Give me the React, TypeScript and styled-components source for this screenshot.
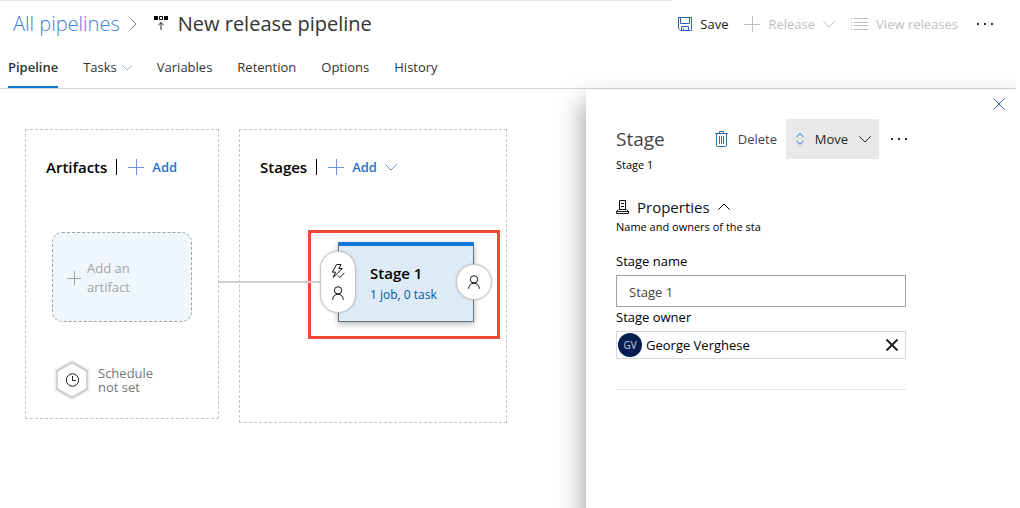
import React from "react";
import styled, { createGlobalStyle } from "styled-components";

const GlobalStyle = createGlobalStyle`
  * { box-sizing: border-box; }
  body {
    margin: 0;
    background: #fff;
    color: #000;
    font: 13px/20px "Open Sans", "Noto Sans", sans-serif;
  }
  button, input { font: inherit; color: inherit; }
  h1, h2, h3, p { margin: 0; font-weight: 400; }
  svg { display: block; flex: none; fill: none; stroke: currentColor; }
`;

const Page = styled.div`
  display: flex;
  flex-direction: column;
  min-height: 100vh;
  margin-right: 4px;
  overflow: hidden;
`;

const Header = styled.header`
  border-bottom: 1px solid #d6d6d6;
`;

const TopRule = styled.div`
  width: 66%;
  height: 1px;
  background: #e6e6e6;
`;

const TitleBar = styled.div`
  display: flex;
  align-items: center;
  justify-content: space-between;
  height: 45px;
  padding: 0 20px 0 13px;
`;

const Breadcrumb = styled.nav`
  display: flex;
  align-items: center;
  white-space: nowrap;
  color: #777;
`;

const CrumbLink = styled.a`
  font-size: 20px;
  line-height: 28px;
  font-weight: 300;
  color: #3f7fd8;
  text-decoration: none;
  margin-right: 10px;
`;

const PageTitle = styled.h1`
  display: flex;
  align-items: center;
  gap: 9px;
  margin-left: 18px;
  font-size: 20px;
  line-height: 28px;
  color: #333;
`;

const Commands = styled.div`
  display: flex;
  align-items: center;
  gap: 16px;
`;

const Command = styled.button<{ $color?: string; $gap?: number }>`
  display: flex;
  align-items: center;
  gap: ${(p) => p.$gap ?? 8}px;
  padding: 0;
  border: 0;
  background: none;
  white-space: nowrap;
  color: ${(p) => p.$color ?? "#222"};
`;

const AddCommand = styled(Command)`
  color: #1f72cf;
  font-weight: 600;

  svg { color: #6c92dc; }
`;

const Tabs = styled.nav`
  display: flex;
  align-items: stretch;
  gap: 25px;
  height: 42px;
  padding-left: 8px;
`;

const Tab = styled.a<{ $active?: boolean }>`
  display: flex;
  align-items: center;
  gap: 5px;
  padding-top: 2px;
  color: #333;
  text-decoration: none;
  font-weight: ${(p) => (p.$active ? 600 : 400)};
  border-bottom: 2px solid ${(p) => (p.$active ? "#0f78d4" : "transparent")};

  svg { color: #8aa9cf; }
`;

const Body = styled.div`
  display: flex;
  flex: 1;
`;

const Canvas = styled.main`
  display: flex;
  flex: 1;
  align-items: flex-start;
  gap: 20px;
  padding: 40px 0 40px 25px;
`;

const Lane = styled.section<{ $width: number; $height: number }>`
  flex: none;
  width: ${(p) => p.$width}px;
  min-height: ${(p) => p.$height}px;
  border: 1px dashed #c4c4c4;
  padding-top: 27px;
`;

const LaneHeader = styled.div`
  display: flex;
  align-items: center;
  height: 20px;
  padding-left: 20px;
`;

const LaneTitle = styled.h2`
  font-size: 15px;
  font-weight: 600;
  padding-right: 9px;
  margin-right: 11px;
  line-height: 16px;
  border-right: 1px solid #000;
`;

const AddArtifact = styled.button`
  display: flex;
  align-items: center;
  gap: 6px;
  width: 140px;
  height: 90px;
  margin: 55px 0 0 26px;
  padding: 2px 14px 0;
  border: 1px dashed #a3a3a3;
  border-radius: 10px;
  background: #eff6fc;
  color: #a3a3a3;
  line-height: 19px;
  text-align: left;
`;

const Schedule = styled.button`
  display: flex;
  align-items: center;
  gap: 8px;
  margin: 37px 0 0 28px;
  padding: 0;
  border: 0;
  background: none;
  color: #767676;
  line-height: 14px;
  text-align: left;
`;

const Highlight = styled.div`
  display: flex;
  width: 192px;
  height: 109px;
  margin: 53px 0 0 68px;
  padding: 9px 0 0 27px;
  border: 3px solid #f04837;
`;

const StageCard = styled.article`
  position: relative;
  width: 136px;
  height: 80px;
  padding: 17px 0 0 31px;
  border: 1px solid #66707a;
  border-top: 4px solid #0f78d4;
  background: #deebf7;
  box-shadow: 0 2px 6px rgba(0, 0, 0, 0.3);
`;

const StageName = styled.h3`
  font-size: 15px;
  line-height: 20px;
  font-weight: 600;
`;

const StageTasks = styled.a`
  font-size: 12px;
  line-height: 24px;
  color: #005a9e;
  text-decoration: none;
`;

const Condition = styled.button<{ $side: "pre" | "post" }>`
  position: absolute;
  ${(p) => (p.$side === "pre" ? "left: -19px; top: 5px; height: 62px;" : "right: -19px; top: 18px; height: 36px;")}
  display: flex;
  flex-direction: column;
  align-items: center;
  justify-content: center;
  gap: 7px;
  width: 36px;
  padding: 0;
  border: 1px solid #c6c6c6;
  border-radius: 18px;
  background: #fff;
  box-shadow: 0 0 2px rgba(0, 0, 0, 0.25);
  color: #111;
`;

const Connector = styled.div`
  position: absolute;
  top: 35px;
  right: 100%;
  width: 120px;
  height: 2px;
  background: #cfcfcf;
`;

const Panel = styled.aside`
  width: 430px;
  padding: 9px 11px 40px 30px;
  background: #fff;
  box-shadow: 0 16px 24px 4px rgba(0, 0, 0, 0.34);
`;

const CloseRow = styled.div`
  display: flex;
  align-items: flex-start;
  justify-content: flex-end;
  height: 21px;
`;

const PanelBar = styled.div`
  display: flex;
  align-items: center;
  justify-content: space-between;
  width: 294px;
  height: 40px;
`;

const PanelTitle = styled.h2`
  font-size: 19px;
  line-height: 28px;
  color: #444;
`;

const PanelCommands = styled.div`
  display: flex;
  align-items: center;
  gap: 9px;
`;

const MoveButton = styled(Command)`
  height: 40px;
  width: 93px;
  padding: 0 8px 0 10px;
  justify-content: space-between;
  background: #e9e9e9;
`;

const Small = styled.p`
  font-size: 11px;
  line-height: 16px;
  white-space: nowrap;
`;

const Subtitle = styled(Small)`
  margin-bottom: 24px;
  line-height: 12px;
`;

const SectionTitle = styled.h3`
  display: flex;
  align-items: center;
  gap: 8px;
  font-size: 15px;
  line-height: 24px;
  color: #111;
`;

const Hint = styled(Small)`
  width: 145px;
  margin-bottom: 16px;
  overflow: hidden;
`;

const Form = styled.form`
  display: flex;
  flex-direction: column;
  width: 290px;
  padding-bottom: 30px;
  border-bottom: 1px solid #e4e4e4;
`;

const Label = styled.label`
  line-height: 20px;
`;

const NameInput = styled.input`
  height: 32px;
  margin: 4px 0 0;
  padding: 2px 12px 0;
  border: 1px solid #a0a0a0;
  border-radius: 0;
  color: #444;
  background: #fff;
`;

const OwnerField = styled.div`
  display: flex;
  align-items: center;
  gap: 4px;
  height: 28px;
  margin-top: 4px;
  padding: 0 7px 0 1px;
  border: 1px solid #d6d6d6;
`;

const OwnerInput = styled.input`
  flex: 1;
  min-width: 0;
  padding: 0;
  border: 0;
  background: none;
  outline: 0;
`;

const Avatar = styled.span`
  width: 24px;
  height: 24px;
  border-radius: 50%;
  background: #001e50;
  color: #c8d2e6;
  font-size: 10px;
  line-height: 24px;
  text-align: center;
`;

const Plus = ({ size = 16 }: { size?: number }) => (
  <svg width={size} height={size} viewBox={`0 0 ${size} ${size}`} aria-hidden="true">
    <path d={`M${size / 2 + 0.5} 0v${size}M0 ${size / 2 + 0.5}h${size}`} />
  </svg>
);

const Chevron = ({ size = 12, dir = "down" }: { size?: number; dir?: "down" | "up" | "right" }) => (
  <svg
    width={dir === "right" ? size / 2 : size}
    height={dir === "right" ? size : size / 2}
    viewBox={dir === "right" ? "0 0 6 12" : "0 0 12 6"}
    overflow="visible"
    aria-hidden="true"
  >
    <path d={dir === "down" ? "M.3.3 6 6 11.7.3" : dir === "up" ? "M.3 5.7 6 0l5.7 5.7" : "M.3.3 6 6 .3 11.7"} />
  </svg>
);

const PipelineIcon = () => (
  <svg width="15" height="15" viewBox="0 0 15 15" aria-hidden="true">
    <path d="M0 0h4v4H0zM10 0h4v4h-4z" fill="#000" stroke="none" />
    <path d="M5.500.500h3v3h-3z" stroke="#000" />
    <path d="M7 14V6.500M4.300 9.200 7 6.500l2.700 2.700" stroke="#222" />
  </svg>
);

const SaveIcon = () => (
  <svg width="14" height="14" viewBox="0 0 14 14" color="#2b62b8" aria-hidden="true">
    <path d="M.5.5h13v13H2.500l-2-2zM2.500.5v6h9v-6M3.500 13.500v-4h7v4M5.500 11.500v2" />
  </svg>
);

const ListIcon = () => (
  <svg width="17" height="12" viewBox="0 0 17 12" aria-hidden="true">
    <path d="M3 .5h14M3 4.500h14M3 7.500h14M3 11.500h14M0 .5h1M0 4.500h1M0 7.500h1M0 11.500h1" />
  </svg>
);

const Dots = () => (
  <svg width="22" height="4" viewBox="0 0 22 4" aria-hidden="true">
    <path d="M3 1h2v2H3zM10 1h2v2h-2zM17 1h2v2h-2z" fill="#333" stroke="none" />
  </svg>
);

const Cross = ({ size = 12, weight = 1 }: { size?: number; weight?: number }) => (
  <svg width={size} height={size} viewBox="0 0 12 12" strokeWidth={weight} aria-hidden="true">
    <path d="m.5.5 11 11M11.500.5l-11 11" />
  </svg>
);

const TrashIcon = () => (
  <svg width="13" height="16" viewBox="0 0 13 16" color="#2b6cb8" aria-hidden="true">
    <path d="M0 2.500h13M4.500 2.500v-2h4v2M1.500 2.500v12q0 1 1 1h8q1 0 1-1v-12M4.500 5v8M6.500 5v8M8.500 5v8" />
  </svg>
);

const MoveIcon = () => (
  <svg width="8" height="12" viewBox="0 0 8 12" color="#2b6cb8" aria-hidden="true">
    <path d="M.5 4 4 .7 7.500 4M.5 8 4 11.300 7.500 8" />
  </svg>
);

const PersonIcon = () => (
  <svg width="12" height="14" viewBox="0 0 12 14" aria-hidden="true">
    <circle cx="6" cy="4.400" r="3.700" />
    <path d="M.6 13.700Q1.200 8.500 6 8.100q4.800.4 5.400 5.600" />
  </svg>
);

const TriggerIcon = () => (
  <svg width="14" height="15" viewBox="0 0 14 15" aria-hidden="true">
    <path d="M5.500.6h4.500L7.800 4.500h3.400L2.300 13.400l2.200-5.300H1.300z" />
    <path d="m6.800 11.500 2 2L13.400 9" />
  </svg>
);

const ClockHexagon = () => (
  <svg width="36" height="42" viewBox="0 0 36 42" aria-hidden="true">
    <path d="M18 2.500 34 11.500v19L18 39.500 2 30.500v-19z" fill="#fff" stroke="#ececec" strokeWidth="3" />
    <path d="M18 3.500 33 12v18L18 38.500 3 30V12z" stroke="#c6c6c6" strokeWidth="1.500" />
    <circle cx="18.500" cy="21" r="6.200" stroke="#222" />
    <path d="M18.500 17v4.500H22" stroke="#301028" />
  </svg>
);

const PropertiesIcon = () => (
  <svg width="13" height="14" viewBox="0 0 13 14" aria-hidden="true">
    <path d="M3.500 9.500V.5h6v9M5 3.500h3M5 6.500h3M3 9.500h7M2.500 9.500l-2 2v2h12v-2l-2-2M.5 11.500h12" stroke="#111" />
  </svg>
);

export default function App() {
  return (
    <>
      <GlobalStyle />
      <Page>
        <Header>
          <TopRule />
          <TitleBar>
            <Breadcrumb aria-label="Breadcrumb">
              <CrumbLink href="#pipelines">All pipelines</CrumbLink>
              <Chevron dir="right" />
              <PageTitle>
                <PipelineIcon />
                New release pipeline
              </PageTitle>
            </Breadcrumb>
            <Commands>
              <Command>
                <SaveIcon />
                Save
              </Command>
              <Command $color="#c0c0c0">
                <Plus />
                Release
                <Chevron />
              </Command>
              <Command $color="#c0c0c0">
                <ListIcon />
                View releases
              </Command>
              <Command aria-label="More actions">
                <Dots />
              </Command>
            </Commands>
          </TitleBar>
          <Tabs aria-label="Pipeline views">
            <Tab href="#pipeline" $active>Pipeline</Tab>
            <Tab href="#tasks">
              Tasks
              <Chevron size={10} />
            </Tab>
            <Tab href="#variables">Variables</Tab>
            <Tab href="#retention">Retention</Tab>
            <Tab href="#options">Options</Tab>
            <Tab href="#history">History</Tab>
          </Tabs>
        </Header>
        <Body>
          <Canvas>
            <Lane $width={194} $height={290}>
              <LaneHeader>
                <LaneTitle>Artifacts</LaneTitle>
                <AddCommand>
                  <Plus />
                  Add
                </AddCommand>
              </LaneHeader>
              <AddArtifact>
                <Plus size={14} />
                <span>
                  Add an
                  <br />
                  artifact
                </span>
              </AddArtifact>
              <Schedule>
                <ClockHexagon />
                <span>
                  Schedule
                  <br />
                  not set
                </span>
              </Schedule>
            </Lane>
            <Lane $width={268} $height={294}>
              <LaneHeader>
                <LaneTitle>Stages</LaneTitle>
                <AddCommand>
                  <Plus />
                  Add
                  <Chevron />
                </AddCommand>
              </LaneHeader>
              <Highlight>
                <StageCard>
                  <Connector />
                  <StageName>Stage 1</StageName>
                  <StageTasks href="#stage-tasks">1 job, 0 task</StageTasks>
                  <Condition $side="pre" aria-label="Pre-deployment conditions">
                    <TriggerIcon />
                    <PersonIcon />
                  </Condition>
                  <Condition $side="post" aria-label="Post-deployment conditions">
                    <PersonIcon />
                  </Condition>
                </StageCard>
              </Highlight>
            </Lane>
          </Canvas>
          <Panel>
            <CloseRow>
              <Command $color="#3b6cc4" aria-label="Close">
                <Cross />
              </Command>
            </CloseRow>
            <PanelBar>
              <PanelTitle>Stage</PanelTitle>
              <PanelCommands>
                <Command $gap={10} $color="#444">
                  <TrashIcon />
                  Delete
                </Command>
                <MoveButton>
                  <MoveIcon />
                  Move
                  <Chevron />
                </MoveButton>
                <Command aria-label="More stage actions">
                  <Dots />
                </Command>
              </PanelCommands>
            </PanelBar>
            <Subtitle>Stage 1</Subtitle>
            <SectionTitle>
              <PropertiesIcon />
              Properties
              <Chevron dir="up" />
            </SectionTitle>
            <Hint>Name and owners of the stage</Hint>
            <Form>
              <Label htmlFor="stage-name">Stage name</Label>
              <NameInput id="stage-name" defaultValue="Stage 1" />
              <Label htmlFor="stage-owner">Stage owner</Label>
              <OwnerField>
                <Avatar>GV</Avatar>
                <OwnerInput id="stage-owner" defaultValue="George Verghese" />
                <Command type="button" aria-label="Remove owner">
                  <Cross weight={2} />
                </Command>
              </OwnerField>
            </Form>
          </Panel>
        </Body>
      </Page>
    </>
  );
}
